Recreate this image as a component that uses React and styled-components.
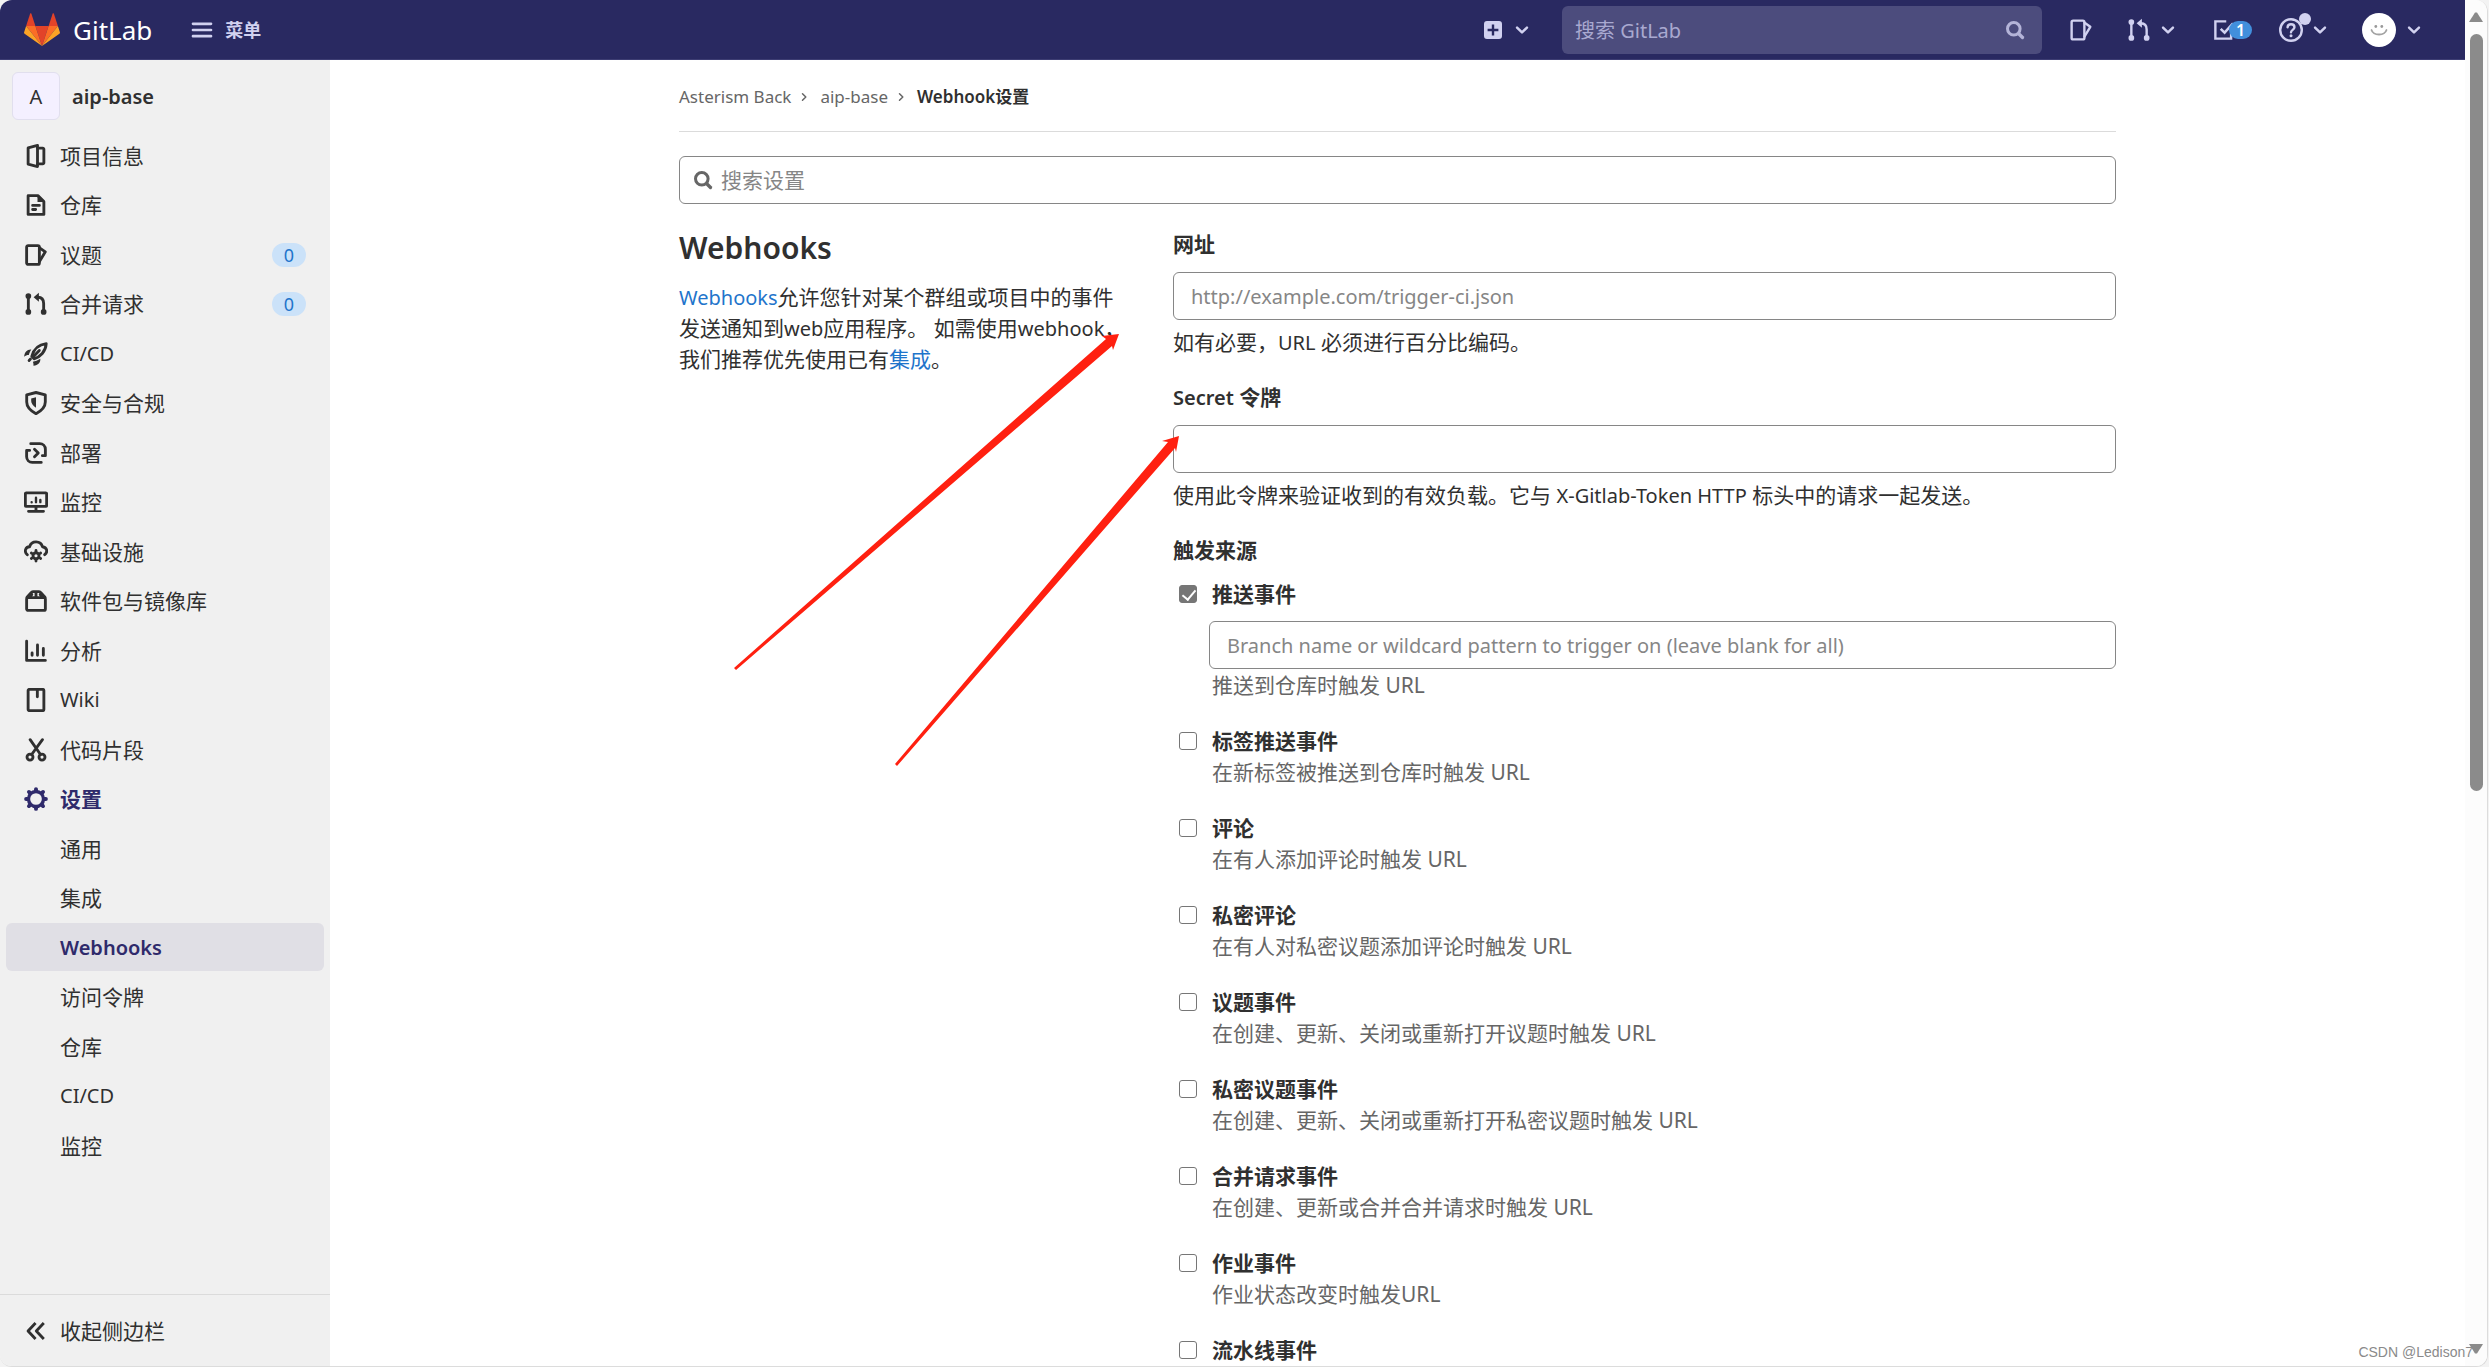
import React from 'react';
import styled, { createGlobalStyle } from 'styled-components';

const GlobalStyle = createGlobalStyle`
  * {
    box-sizing: border-box;
  }

  body {
    margin: 0;
    background: #f3f3f3;
    color: #303030;
    font-family: 'Noto Sans', 'Noto Sans CJK SC', sans-serif;
    font-size: 21px;
    line-height: 32px;
  }

  button,
  input {
    font: inherit;
    color: inherit;
  }

  button {
    padding: 0;
    border: 0;
    background: none;
    cursor: pointer;
  }

  a {
    color: inherit;
    text-decoration: none;
  }

  ul, ol {
    margin: 0;
    padding: 0;
    list-style: none;
  }
`;

/* ---------- icons ---------- */

const Svg = styled.svg`
  display: block;
  flex: none;
  width: ${({ $size }) => $size || 24}px;
  height: ${({ $size }) => $size || 24}px;
  fill: none;
  stroke: currentColor;
  stroke-width: ${({ $weight }) => $weight || 1.6};
  stroke-linecap: round;
  stroke-linejoin: round;

  .solid {
    fill: currentColor;
    stroke: none;
  }
`;

const shapes = {
  project: (
    <>
      <path d="M2.75 2.6 9 .95v14.1L2.75 13.4z" />
      <path d="M9 2.75h3.5a.75.75 0 0 1 .75.75v9a.75.75 0 0 1-.75.75H9" />
    </>
  ),
  doc: (
    <>
      <path d="M2.75 1.75h6.5l4 4v8.5H2.75z" />
      <path className="solid" d="M9 1.5 13.5 6H9z" />
      <path d="M5.75 8.25h4.5M5.75 11h2" />
    </>
  ),
  issues: (
    <>
      <rect x="1.75" y="1.75" width="8.5" height="12.5" rx="1" />
      <path d="M10.4 3.2 14.2 5.9 10.4 12.2" />
    </>
  ),
  merge: (
    <>
      <circle className="solid" cx="2.9" cy="2.7" r="1.9" />
      <circle className="solid" cx="2.9" cy="13.3" r="1.9" />
      <circle className="solid" cx="13.1" cy="13.3" r="1.9" />
      <path d="M2.9 3v10M13.1 13V7.6c0-2.3-1.4-4-3.9-4.1" />
      <path className="solid" d="M9.9.5v6L6.4 3.5z" />
    </>
  ),
  rocket: (
    <>
      <path d="M5.2 9.6C6.3 5.5 9.4 1.7 14.8 1.1c-.3 5.2-4 8.9-8.1 10.1z" />
      <path d="M10.2 5.6 6.2 9.8" />
      <path className="solid" d="M.1 9.8C.3 6.8 2.2 4.7 4.9 5 3.9 6.4 3.5 7.5 3.2 8.7 2 8.7.9 9.1.1 9.8z" />
      <path className="solid" d="M5.9 13.2c1.4-.3 3.4-1 5-2 .1 2.6-1.3 4.3-4.6 4.7.1-.9 0-1.9-.4-2.7z" />
      <path d="m3.4 12.3.9-.9" />
    </>
  ),
  shield: (
    <>
      <path d="M8 1l6.200 1.600v4.700c0 3.400-2.700 5.900-6.200 7.800-3.500-1.900-6.200-4.400-6.200-7.800V2.600z" />
      <path className="solid" d="M8 4.200v6.900C6 9.700 4.800 8.200 4.800 6.600V5z" />
    </>
  ),
  deploy: (
    <>
      <path d="M4.500 1.750h6a3.800 3.800 0 0 1 3.750 3.750v4.250h-2" />
      <path d="M11.500 14.250h-6a3.800 3.800 0 0 1-3.750-3.750V6.250h2" />
      <path d="M7 5.500 9.500 8 7 10.500" />
    </>
  ),
  monitor: (
    <>
      <rect x=".9" y="1.900" width="14.200" height="9" rx=".6" />
      <path d="M3 14.200h10M8 11v3" />
      <path d="M5.100 8.200v-.1M8 8.100V5.200M10.900 8.100V6.600" strokeWidth="1.600" />
    </>
  ),
  cloudGear: (
    <>
      <path d="M2.200 9.800C-.2 7.600 1 4.700 3.700 4.500 5 .1 11.200.2 12.300 4.500c2.900.3 3.900 3.300 1.500 5.300" />
      <circle cx="8" cy="10.500" r="2" />
      <path d="M8 7.400V7M8 14v-.4M5.200 8.900l-.300-.200M11.100 12.300l-.300-.200M4.900 12.300l.300-.200M10.800 8.900l.300-.200" />
    </>
  ),
  pack: (
    <>
      <rect x="1.750" y="5.750" width="12.500" height="8.500" rx="1" />
      <path d="M2 5.500 4.900 2.300c.4-.400.800-.600 1.300-.600h3.600c.5 0 .9.200 1.300.600L14 5.500M8 2v3.500" />
      <path d="M5.200 3.600 4 5.400M10.800 3.600 12 5.400" />
    </>
  ),
  chart: (
    <>
      <path d="M1.750 1.500v12.750h12.500" />
      <path d="M5.400 10.800V9.300M9 10.800V4M12.900 10.800V6.300" strokeWidth="1.900" />
    </>
  ),
  book: (
    <>
      <rect x="2.750" y=".9" width="10.500" height="14.200" rx=".8" />
      <path d="M8.900 1.500v4.400" strokeWidth="1.900" />
    </>
  ),
  scissors: (
    <>
      <circle cx="4" cy="12.700" r="2" />
      <circle cx="12" cy="12.700" r="2" />
      <path d="M4.100 1.100 11 11M12.300 1.100 5.100 11" />
    </>
  ),
  gear: (
    <>
      <circle cx="8" cy="8" r="5" strokeWidth="2.200" />
      <path
        d="M8 1.400v1M8 13.600v1M1.400 8h1M13.600 8h1M3.300 3.300l.7.700M12 12l.7.700M3.300 12.700 4 12M12 4l.7-.700"
        strokeWidth="2.600"
      />
    </>
  ),
  collapse: <path d="M7.700 2.700 2.700 8l5 5.300M13.200 2.700 8.200 8l5 5.300" strokeWidth="1.900" strokeLinecap="butt" />,
  search: (
    <>
      <circle cx="7.200" cy="7.200" r="4.200" strokeWidth="2" />
      <path d="m10.500 10.500 2.500 2.500" strokeWidth="2.200" />
    </>
  ),
  menu: <path d="M2 3.900h12M2 8h12M2 12.100h12" />,
  plus: (
    <path
      className="solid"
      fillRule="evenodd"
      d="M4 2h8a2 2 0 0 1 2 2v8a2 2 0 0 1-2 2H4a2 2 0 0 1-2-2V4a2 2 0 0 1 2-2zm3.200 2.400v2.800H4.400v1.600h2.800v2.800h1.600V8.800h2.800V7.200H8.800V4.400z"
    />
  ),
  down: <path d="M3.600 5.800 8 10.200l4.400-4.400" strokeWidth="2.200" />,
  right: <path d="m6 3.600 4.400 4.400L6 12.400" strokeWidth="2" />,
  todo: (
    <>
      <path d="M9.500 2.250H2.250v11.500h10.500V10" strokeLinecap="butt" strokeLinejoin="miter" />
      <path d="m5.800 7.300 2.600 2.500L14 3.500" strokeLinecap="butt" strokeLinejoin="miter" strokeWidth="1.700" />
    </>
  ),
  help: (
    <>
      <circle cx="8" cy="8" r="7.200" />
      <path d="M5.700 6.200C5.800 4.900 6.800 4.200 8 4.200c1.300 0 2.300.8 2.300 2 0 1.700-2.300 1.700-2.300 3.300" />
      <circle className="solid" cx="8" cy="11.800" r="1" />
    </>
  ),
};

const Icon = ({ name, size, weight }) => (
  <Svg viewBox="0 0 16 16" $size={size} $weight={weight} aria-hidden="true">
    {shapes[name]}
  </Svg>
);

const Tanuki = () => (
  <svg width="36" height="33" viewBox="0 0 36 33" aria-hidden="true">
    <path fill="#e24329" d="M18 33 24.600 13H11.400z" />
    <path fill="#fc6d26" d="M18 33 11.400 13H2.100z" />
    <path fill="#fca326" d="M2.100 13 .1 19.200c-.2.600 0 1.200.5 1.500L18 33z" />
    <path fill="#e24329" d="M2.100 13h9.300L7.400.700c-.2-.600-1.100-.600-1.300 0z" />
    <path fill="#fc6d26" d="M18 33 24.600 13h9.300z" />
    <path fill="#fca326" d="m33.900 13 2 6.200c.2.600 0 1.200-.5 1.500L18 33z" />
    <path fill="#e24329" d="M33.900 13h-9.300l4-12.300c.2-.600 1.100-.600 1.300 0z" />
  </svg>
);

/* ---------- shell ---------- */

const Window = styled.div`
  position: relative;
  display: flex;
  height: 100vh;
  margin-right: 1px;
  overflow: hidden;
  background: #fff;
  border-right: 1px solid #dcdcdc;
  border-bottom: 1px solid #dcdcdc;
  border-radius: 12px;
`;

const Page = styled.div`
  flex: 1;
  min-width: 0;
  display: flex;
  flex-direction: column;
`;

const Body = styled.div`
  flex: 1;
  min-height: 0;
  display: flex;
`;

const Scrollbar = styled.div`
  flex: none;
  width: 22px;
  display: flex;
  flex-direction: column;
  align-items: center;
  background: #fcfcfc;
  color: #8b8b8b;
`;

const ScrollArrow = styled.button`
  flex: none;
  height: 34px;
  display: flex;
  align-items: center;
`;

const ScrollTrack = styled.div`
  flex: 1;
  width: 13px;
`;

const ScrollThumb = styled.div`
  height: 58.3%;
  border-radius: 7px;
  background: #8b8b8b;
`;

/* ---------- top bar ---------- */

const Header = styled.header`
  flex: none;
  height: 60px;
  display: flex;
  align-items: center;
  padding: 0 42px 0 24px;
  background: #292961;
  border-bottom: 1px solid #3d3d73;
  color: #d1d1f0;
`;

const Brand = styled.a`
  display: flex;
  align-items: center;
  gap: 13px;
  color: #fff;
  font-size: 26px;
`;

const MenuButton = styled.button`
  display: flex;
  align-items: center;
  gap: 11px;
  margin-left: 38px;
  font-size: 18px;
  font-weight: 700;
`;

const Tools = styled.nav`
  display: flex;
  align-items: center;
  gap: 27px;
  margin-left: auto;
`;

const Tool = styled.button`
  position: relative;
  display: flex;
  align-items: center;
  gap: 8px;
  margin-left: ${({ $lead }) => $lead || 0}px;
`;

const TopSearch = styled.label`
  display: flex;
  align-items: center;
  width: 480px;
  height: 48px;
  margin-left: 4px;
  padding: 0 15px 0 13px;
  border-radius: 6px;
  background: #4c4c7d;
  color: #b4b4d8;

  input {
    flex: 1;
    min-width: 0;
    padding: 2px 0 0;
    border: 0;
    outline: 0;
    background: none;
    font-size: 20px;
  }

  input::placeholder {
    color: #a9a9d0;
    opacity: 1;
  }
`;

const TodoCount = styled.span`
  margin-left: -15px;
  width: 23px;
  height: 18px;
  border-radius: 9px;
  background: #428fdc;
  color: #fff;
  font-size: 16px;
  font-weight: 600;
  line-height: 18px;
  text-align: center;
`;

const NewDot = styled.span`
  position: absolute;
  left: 20px;
  top: -5px;
  width: 12px;
  height: 12px;
  border-radius: 50%;
  background: #d1d1f0;
`;

const Face = styled.svg`
  display: block;
  width: 36px;
  height: 36px;
`;

/* ---------- sidebar ---------- */

const Sidebar = styled.aside`
  flex: none;
  width: 330px;
  display: flex;
  flex-direction: column;
  background: #f0f0f0;
`;

const Project = styled.a`
  display: flex;
  align-items: center;
  gap: 12px;
  margin: 12px 12px 11px;
  font-size: 20px;
  font-weight: 600;
`;

const ProjectAvatar = styled.span`
  width: 48px;
  height: 48px;
  border: 1px solid #e1dfee;
  border-radius: 6px;
  background: #f4f0ff;
  font-weight: 400;
  line-height: 48px;
  text-align: center;
`;

const ProjectName = styled.span`
  padding-top: 2px;
`;

const NavList = styled.ul`
  flex: 1;
  padding: 0 6px;

  li {
    margin-bottom: 1px;
  }

  li:nth-child(even) {
    margin-bottom: 2px;
  }
`;

const NavLink = styled.a`
  display: flex;
  align-items: center;
  gap: 12px;
  height: 48px;
  padding: 2px 18px 0 ${({ $sub }) => ($sub ? 54 : 18)}px;
  border-radius: 6px;
  background: ${({ $active }) => ($active ? '#e0dfe5' : 'none')};
  color: ${({ $active, $open }) => ($active || $open ? '#2f2a6b' : 'inherit')};
  font-size: ${({ $latin }) => ($latin ? 20 : 21)}px;
  font-weight: ${({ $active, $open }) => ($active || $open ? 600 : 400)};
`;

const Count = styled.span`
  margin-left: auto;
  width: 34px;
  height: 24px;
  border-radius: 12px;
  background: #cbe2f9;
  color: #1f75cb;
  font-size: 18px;
  line-height: 24px;
  text-align: center;
`;

const Collapse = styled.button`
  display: flex;
  align-items: center;
  gap: 12px;
  height: 72px;
  padding: 0 24px;
  border-top: 1px solid #dbdbdb;
`;

/* ---------- content ---------- */

const Main = styled.main`
  flex: 1;
  min-width: 0;
  overflow: hidden;
  padding: 0 24px;
`;

const Container = styled.div`
  max-width: 1437px;
  margin: 0 auto;
`;

const Breadcrumbs = styled.ol`
  display: flex;
  align-items: center;
  height: 72px;
  padding-top: 2px;
  border-bottom: 1px solid #dbdbdb;
  color: #666;
  font-size: 17px;

  li {
    display: flex;
    align-items: center;
  }

  svg {
    margin: 0 10px 0 7px;
  }

  li:last-child {
    color: #303030;
    font-weight: 600;
  }
`;

const SettingsSearch = styled.label`
  display: flex;
  align-items: center;
  gap: 6px;
  height: 48px;
  margin: 24px 0;
  padding: 0 11px;
  border: 1px solid #868686;
  border-radius: 6px;
  color: #666;

  input {
    flex: 1;
    padding: 0;
    border: 0;
    outline: 0;
    background: none;
  }

  input::placeholder {
    color: #868686;
    opacity: 1;
  }
`;

const Columns = styled.div`
  display: grid;
  grid-template-columns: repeat(12, minmax(0, 1fr));
  column-gap: 45px;
`;

const Intro = styled.section`
  grid-column: span 4;

  h4 {
    margin: 0 0 14px;
    font-size: 30px;
    font-weight: 600;
    line-height: 40px;
  }

  p {
    margin: 0;
    line-height: 31px;
  }

  a {
    color: #1f75cb;
  }
`;

const Latin = styled.span`
  font-size: 20px;
  line-height: 20px;
`;

const Form = styled.form`
  grid-column: span 8;
`;

const Field = styled.div`
  margin-bottom: 23px;
`;

const FieldLabel = styled.label`
  display: block;
  margin-bottom: 12px;
  font-weight: 600;
`;

const TextInput = styled.input`
  display: block;
  width: 100%;
  height: 48px;
  padding: 0 17px;
  border: 1px solid #868686;
  border-radius: 6px;
  background: #fff;
  font-size: 20px;

  &::placeholder {
    color: #868686;
    opacity: 1;
  }
`;

const FieldHelp = styled.div`
  margin-top: 6px;
`;

const Triggers = styled.fieldset`
  margin: 0;
  padding: 0;
  border: 0;

  legend {
    padding: 0;
    margin-bottom: 12px;
    font-weight: 600;
  }
`;

const Trigger = styled.div`
  margin-bottom: 25px;
  padding-left: 36px;
`;

const TriggerLabel = styled.label`
  display: flex;
  align-items: center;
  gap: 15px;
  margin-left: -30px;
  font-weight: 600;
`;

const Checkbox = styled.input.attrs({ type: 'checkbox' })`
  appearance: none;
  flex: none;
  width: 18px;
  height: 18px;
  margin: 0;
  border: 1px solid #767676;
  border-radius: 3px;
  background: #fff;

  &:checked {
    background: #767676;
  }

  &:checked::before {
    content: '';
    display: block;
    width: 6px;
    height: 11px;
    margin: 1px 0 0 5px;
    border: solid #fff;
    border-width: 0 2px 2px 0;
    transform: rotate(40deg);
  }
`;

const TriggerInput = styled.div`
  margin: 11px 0 1px;
`;

const TriggerText = styled.div`
  padding-left: 3px;
  color: #666;
  line-height: 30px;
`;

/* ---------- overlay ---------- */

const Arrows = styled.svg`
  position: absolute;
  left: 0;
  top: 0;
  width: 1200px;
  height: 780px;
  fill: #ff2010;
  pointer-events: none;
`;

const Watermark = styled.div`
  position: absolute;
  right: 14px;
  bottom: 5px;
  color: #8a8a8a;
  font-family: 'Liberation Sans', sans-serif;
  font-size: 14px;
  line-height: 18px;
`;

const navItems = [
  { icon: 'project', text: '项目信息' },
  { icon: 'doc', text: '仓库' },
  { icon: 'issues', text: '议题', count: 0 },
  { icon: 'merge', text: '合并请求', count: 0 },
  { icon: 'rocket', text: 'CI/CD', latin: true },
  { icon: 'shield', text: '安全与合规' },
  { icon: 'deploy', text: '部署' },
  { icon: 'monitor', text: '监控' },
  { icon: 'cloudGear', text: '基础设施' },
  { icon: 'pack', text: '软件包与镜像库' },
  { icon: 'chart', text: '分析' },
  { icon: 'book', text: 'Wiki', latin: true },
  { icon: 'scissors', text: '代码片段' },
  { icon: 'gear', text: '设置', open: true },
  { text: '通用' },
  { text: '集成' },
  { text: 'Webhooks', latin: true, active: true },
  { text: '访问令牌' },
  { text: '仓库' },
  { text: 'CI/CD', latin: true },
  { text: '监控' },
];

const triggers = [
  { id: 'push', title: '推送事件', text: '推送到仓库时触发 URL', checked: true, branch: true },
  { id: 'tag', title: '标签推送事件', text: '在新标签被推送到仓库时触发 URL' },
  { id: 'note', title: '评论', text: '在有人添加评论时触发 URL' },
  { id: 'private-note', title: '私密评论', text: '在有人对私密议题添加评论时触发 URL' },
  { id: 'issue', title: '议题事件', text: '在创建、更新、关闭或重新打开议题时触发 URL' },
  { id: 'private-issue', title: '私密议题事件', text: '在创建、更新、关闭或重新打开私密议题时触发 URL' },
  { id: 'merge', title: '合并请求事件', text: '在创建、更新或合并合并请求时触发 URL' },
  { id: 'job', title: '作业事件', text: '作业状态改变时触发URL' },
  { id: 'pipeline', title: '流水线事件' },
];

const TopBar = () => (
  <Header>
    <Brand href="#">
      <Tanuki />
      GitLab
    </Brand>
    <MenuButton type="button">
      <Icon name="menu" weight={1.8} />
      菜单
    </MenuButton>
    <Tools>
      <Tool type="button" aria-label="New">
        <Icon name="plus" />
        <Icon name="down" size={18} />
      </Tool>
      <TopSearch>
        <input type="text" placeholder="搜索 GitLab" aria-label="搜索 GitLab" />
        <Icon name="search" />
      </TopSearch>
      <Tool type="button" aria-label="Issues">
        <Icon name="issues" />
      </Tool>
      <Tool type="button" aria-label="Merge requests" $lead={7}>
        <Icon name="merge" />
        <Icon name="down" size={18} />
      </Tool>
      <Tool type="button" aria-label="To-Do" $lead={8}>
        <Icon name="todo" />
        <TodoCount>1</TodoCount>
      </Tool>
      <Tool type="button" aria-label="Help">
        <Icon name="help" />
        <NewDot />
        <Icon name="down" size={18} />
      </Tool>
      <Tool type="button" aria-label="Account" $lead={5}>
        <Face viewBox="0 0 36 36">
          <circle cx="18" cy="18" r="17" fill="#fff" />
          <path d="M10.500 18c2 6 13 6 15 0" fill="none" stroke="#a3a3a3" strokeWidth="1.800" strokeLinecap="round" />
          <circle cx="14.800" cy="14.500" r="1.400" fill="#999" />
          <circle cx="20.800" cy="14.500" r="1.400" fill="#999" />
        </Face>
        <Icon name="down" size={18} />
      </Tool>
    </Tools>
  </Header>
);

const SideNav = () => (
  <Sidebar>
    <Project href="#">
      <ProjectAvatar>A</ProjectAvatar>
      <ProjectName>aip-base</ProjectName>
    </Project>
    <NavList>
      {navItems.map(({ icon, text, count, latin, active, open }, i) => (
        <li key={i}>
          <NavLink href="#" $sub={!icon} $latin={latin} $active={active} $open={open}>
            {icon && <Icon name={icon} weight={1.9} />}
            {text}
            {count !== undefined && <Count>{count}</Count>}
          </NavLink>
        </li>
      ))}
    </NavList>
    <Collapse type="button">
      <Icon name="collapse" />
      收起侧边栏
    </Collapse>
  </Sidebar>
);

const Hooks = () => (
  <Columns>
    <Intro>
      <h4>Webhooks</h4>
      <p>
        <a href="#"><Latin>Webhooks</Latin></a>
        允许您针对某个群组或项目中的事件发送通知到
        <Latin>web</Latin>
        应用程序。 如需使用
        <Latin>webhook</Latin>
        ，我们推荐优先使用已有
        <a href="#">集成</a>
        。
      </p>
    </Intro>
    <Form>
      <Field>
        <FieldLabel htmlFor="hook-url">网址</FieldLabel>
        <TextInput id="hook-url" type="text" placeholder="http://example.com/trigger-ci.json" />
        <FieldHelp>
          如有必要，<Latin>URL</Latin> 必须进行百分比编码。
        </FieldHelp>
      </Field>
      <Field>
        <FieldLabel htmlFor="hook-token"><Latin>Secret</Latin> 令牌</FieldLabel>
        <TextInput id="hook-token" type="text" />
        <FieldHelp>
          使用此令牌来验证收到的有效负载。它与 <Latin>X-Gitlab-Token HTTP</Latin> 标头中的请求一起发送。
        </FieldHelp>
      </Field>
      <Triggers>
        <legend>触发来源</legend>
        {triggers.map(({ id, title, text, checked, branch }) => (
          <Trigger key={id}>
            <TriggerLabel>
              <Checkbox defaultChecked={checked} />
              {title}
            </TriggerLabel>
            {branch && (
              <TriggerInput>
                <TextInput
                  type="text"
                  aria-label="Branch"
                  placeholder="Branch name or wildcard pattern to trigger on (leave blank for all)"
                />
              </TriggerInput>
            )}
            {text && <TriggerText>{text}</TriggerText>}
          </Trigger>
        ))}
      </Triggers>
    </Form>
  </Columns>
);

export default () => (
  <>
    <GlobalStyle />
    <Window>
      <Page>
        <TopBar />
        <Body>
          <SideNav />
          <Main>
            <Container>
              <Breadcrumbs>
                <li>
                  <a href="#">Asterism Back</a>
                  <Icon name="right" size={12} />
                </li>
                <li>
                  <a href="#">aip-base</a>
                  <Icon name="right" size={12} />
                </li>
                <li><a href="#">Webhook设置</a></li>
              </Breadcrumbs>
              <SettingsSearch>
                <Icon name="search" />
                <input type="text" placeholder="搜索设置" aria-label="搜索设置" />
              </SettingsSearch>
              <Hooks />
            </Container>
          </Main>
        </Body>
      </Page>
      <Scrollbar>
        <ScrollArrow type="button" aria-label="Scroll up">
          <svg width="14" height="10" viewBox="0 0 14 10"><path fill="currentColor" d="M6 .5h2L14 10H0z" /></svg>
        </ScrollArrow>
        <ScrollTrack><ScrollThumb /></ScrollTrack>
        <ScrollArrow type="button" aria-label="Scroll down">
          <svg width="14" height="10" viewBox="0 0 14 10"><path fill="currentColor" d="M6 9.500h2L14 0H0z" /></svg>
        </ScrollArrow>
      </Scrollbar>
      <Arrows viewBox="0 0 1200 780" aria-hidden="true">
        <path d="M734 668 1106 339 1102 336 1119 334 1113 350 1112 346 736 670z" />
        <path d="M895 764 1168 442 1162 441 1179 436 1176 452 1175 448 897 766z" />
      </Arrows>
      <Watermark>CSDN @Ledison7</Watermark>
    </Window>
  </>
);
